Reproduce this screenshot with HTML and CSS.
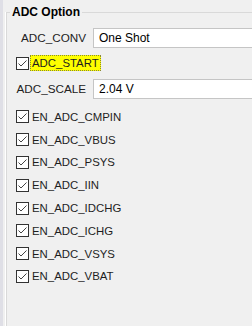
FILE: index.html
```html
<!DOCTYPE html>
<html>
<head>
<meta charset="utf-8">
<link rel="stylesheet" href="styles.css">
</head>
<body>
<div class="window">
  <div class="edge"></div>
  <section class="group">
    <div class="title">ADC Option</div>
    <div class="field conv"><span class="label">ADC_CONV</span><div class="box">One Shot</div></div>
    <div class="check start"><svg class="cb" viewBox="0 0 13 13" width="13" height="13"><rect x="0.5" y="0.5" width="12" height="12" fill="#fff" stroke="#333"/><path d="M2.5 6.5 L5 9 L10.5 3.5" fill="none" stroke="#444" stroke-width="1"/></svg><span class="text hl">ADC_START</span></div>
    <div class="field scale"><span class="label">ADC_SCALE</span><div class="box">2.04 V</div></div>
    <ul class="list">
      <li class="check"><svg class="cb" viewBox="0 0 13 13" width="13" height="13"><rect x="0.5" y="0.5" width="12" height="12" fill="#fff" stroke="#333"/><path d="M2.5 6.5 L5 9 L10.5 3.5" fill="none" stroke="#444" stroke-width="1"/></svg><span class="text">EN_ADC_CMPIN</span></li>
      <li class="check"><svg class="cb" viewBox="0 0 13 13" width="13" height="13"><rect x="0.5" y="0.5" width="12" height="12" fill="#fff" stroke="#333"/><path d="M2.5 6.5 L5 9 L10.5 3.5" fill="none" stroke="#444" stroke-width="1"/></svg><span class="text">EN_ADC_VBUS</span></li>
      <li class="check"><svg class="cb" viewBox="0 0 13 13" width="13" height="13"><rect x="0.5" y="0.5" width="12" height="12" fill="#fff" stroke="#333"/><path d="M2.5 6.5 L5 9 L10.5 3.5" fill="none" stroke="#444" stroke-width="1"/></svg><span class="text">EN_ADC_PSYS</span></li>
      <li class="check"><svg class="cb" viewBox="0 0 13 13" width="13" height="13"><rect x="0.5" y="0.5" width="12" height="12" fill="#fff" stroke="#333"/><path d="M2.5 6.5 L5 9 L10.5 3.5" fill="none" stroke="#444" stroke-width="1"/></svg><span class="text">EN_ADC_IIN</span></li>
      <li class="check"><svg class="cb" viewBox="0 0 13 13" width="13" height="13"><rect x="0.5" y="0.5" width="12" height="12" fill="#fff" stroke="#333"/><path d="M2.5 6.5 L5 9 L10.5 3.5" fill="none" stroke="#444" stroke-width="1"/></svg><span class="text">EN_ADC_IDCHG</span></li>
      <li class="check"><svg class="cb" viewBox="0 0 13 13" width="13" height="13"><rect x="0.5" y="0.5" width="12" height="12" fill="#fff" stroke="#333"/><path d="M2.5 6.5 L5 9 L10.5 3.5" fill="none" stroke="#444" stroke-width="1"/></svg><span class="text">EN_ADC_ICHG</span></li>
      <li class="check"><svg class="cb" viewBox="0 0 13 13" width="13" height="13"><rect x="0.5" y="0.5" width="12" height="12" fill="#fff" stroke="#333"/><path d="M2.5 6.5 L5 9 L10.5 3.5" fill="none" stroke="#444" stroke-width="1"/></svg><span class="text">EN_ADC_VSYS</span></li>
      <li class="check"><svg class="cb" viewBox="0 0 13 13" width="13" height="13"><rect x="0.5" y="0.5" width="12" height="12" fill="#fff" stroke="#333"/><path d="M2.5 6.5 L5 9 L10.5 3.5" fill="none" stroke="#444" stroke-width="1"/></svg><span class="text">EN_ADC_VBAT</span></li>
    </ul>
  </section>
</div>
</body>
</html>
```

FILE: styles.css
```css
html, body {
  margin: 0;
  padding: 0;
}
body {
  background: #f0f0f0;
  font-family: "Liberation Sans", Arial, sans-serif;
  color: #1e1e1e;
  width: 252px;
  height: 326px;
  overflow: hidden;
}
.window {
  display: flex;
  height: 326px;
}
.edge {
  flex: none;
  width: 3px;
  background: #dfdfe6;
}
.group {
  flex: 1;
  min-width: 0;
  margin: 12px 0 0 3px;
  border-top: 1px solid #d9d9d9;
  border-left: 1px solid #d9d9d9;
  box-shadow: -1px 0 0 #fff;
}
.title {
  width: max-content;
  margin: -8px 0 0 3px;
  padding: 0 2px;
  background: #f0f0f0;
  font-weight: bold;
  font-size: 12px;
  line-height: 14px;
  color: #000;
}
.field {
  display: flex;
  align-items: center;
  height: 20px;
}
.conv {
  margin-top: 9px;
}
.scale {
  margin-top: 8px;
}
.label {
  flex: none;
  width: 79px;
  margin-right: 7px;
  text-align: right;
  font-size: 11.7px;
  line-height: 14px;
  color: #222;
}
.box {
  flex: 1;
  min-width: 0;
  height: 20px;
  box-sizing: border-box;
  border: 1px solid #c5c5c5;
  border-right: none;
  background: #fff;
  padding-left: 5px;
  font-size: 12px;
  line-height: 18px;
  color: #000;
  white-space: nowrap;
}
.check {
  display: flex;
  align-items: center;
  height: 16px;
  padding-left: 9px;
}
.start {
  margin-top: 7px;
}
.cb {
  flex: none;
  display: block;
  margin-right: 3px;
}
.start .cb {
  margin-right: 1px;
}
.text {
  font-size: 11.4px;
  line-height: 14px;
  color: #1e1e1e;
}
.hl {
  box-sizing: border-box;
  height: 16px;
  line-height: 14px;
  padding: 0 1px;
  background: #ffff00;
  border: 1px dotted #8a8a30;
}
.list {
  list-style: none;
  margin: 6.5px 0 0;
  padding: 0;
}
.list .check {
  height: 22.8px;
}
```
